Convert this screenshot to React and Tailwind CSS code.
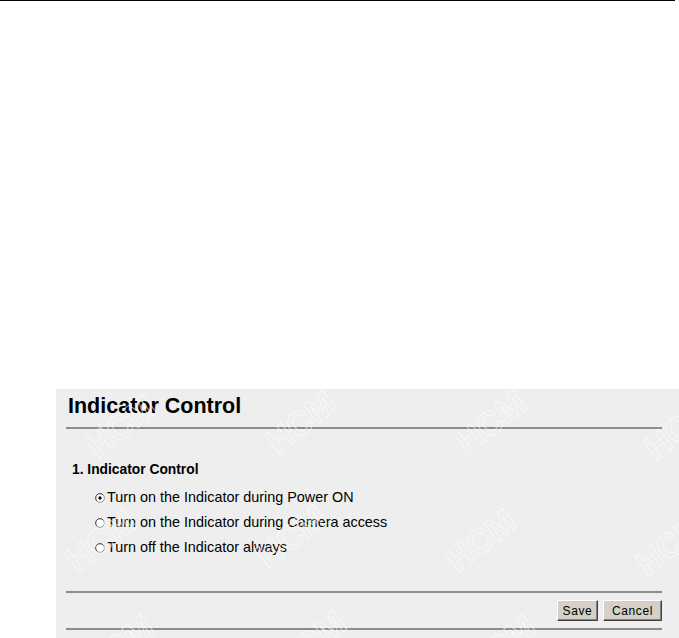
import { useState } from 'react';

const OPTIONS = [
  { id: 'power', label: 'Turn on the Indicator during Power ON' },
  { id: 'camera', label: 'Turn on the Indicator during Camera access' },
  { id: 'off', label: 'Turn off the Indicator always' },
];

const MARKS = [
  [82, 408], [262, 404], [452, 404], [640, 410],
  [62, 522], [252, 518], [442, 522], [632, 526],
  [80, 628], [272, 624], [462, 628],
];

function Radio({ checked }) {
  return (
    <svg width="10" height="10" viewBox="0 0 12 12" className="shrink-0">
      <circle cx="6" cy="6" r="5.2" fill="#ffffff" stroke="#808080" strokeWidth="1" />
      <path d="M2.3 9.7 A5.2 5.2 0 0 1 9.7 2.3" fill="none" stroke="#404040" strokeWidth="1" />
      {checked && <circle cx="6" cy="6" r="2" fill="#000000" />}
    </svg>
  );
}

function Button({ children, className }) {
  return (
    <button
      type="button"
      className={`h-[21px] bg-[#d4d0c8] border border-t-white border-l-white border-r-[#404040] border-b-[#404040] shadow-[inset_-1px_-1px_0_#808080] text-[12px] tracking-[0.6px] text-black font-['Liberation_Sans',Arial,sans-serif] ${className}`}
    >
      {children}
    </button>
  );
}

export default function App() {
  const [mode, setMode] = useState('power');

  return (
    <div className="relative h-[638px] w-[679px] overflow-hidden bg-white font-['Liberation_Sans',Arial,sans-serif]">
      <div className="h-px w-[675px] bg-black" />

      <div className="relative ml-[56px] mt-[388px] h-[249px] bg-[#eeeeee] pl-[10px] pr-[17px] pt-[5px]">
        <h1 className="ml-[2px] text-[21.5px] font-bold leading-[24px] text-black">Indicator Control</h1>
        <div className="mt-[9px] h-[2px] bg-[#8c8c8c]" />

        <div className="ml-[6px] mt-[33px] text-[13.8px] font-bold leading-[15px] text-black">1. Indicator Control</div>

        <div className="mt-[8px] flex flex-col pl-[29px]">
          {OPTIONS.map((o) => (
            <label
              key={o.id}
              onClick={() => setMode(o.id)}
              className="flex h-[25px] cursor-pointer items-center gap-[2px] text-[14.4px] text-black"
            >
              <Radio checked={mode === o.id} />
              {o.label}
            </label>
          ))}
        </div>

        <div className="mt-[31px] h-[2px] bg-[#8c8c8c]" />
        <div className="flex justify-end gap-[5px] pt-[7px]">
          <Button className="w-[41px]">Save</Button>
          <Button className="w-[59px]">Cancel</Button>
        </div>
        <div className="mt-[7px] h-[2px] bg-[#8c8c8c]" />

        {MARKS.map(([x, y], i) => (
          <span
            key={i}
            aria-hidden="true"
            className="pointer-events-none absolute -rotate-[38deg] select-none text-[34px] font-bold leading-none text-transparent opacity-70 [-webkit-text-stroke:0.8px_#ffffff]"
            style={{ left: x - 56, top: y - 388 }}
          >
            HCM
          </span>
        ))}
      </div>
    </div>
  );
}
